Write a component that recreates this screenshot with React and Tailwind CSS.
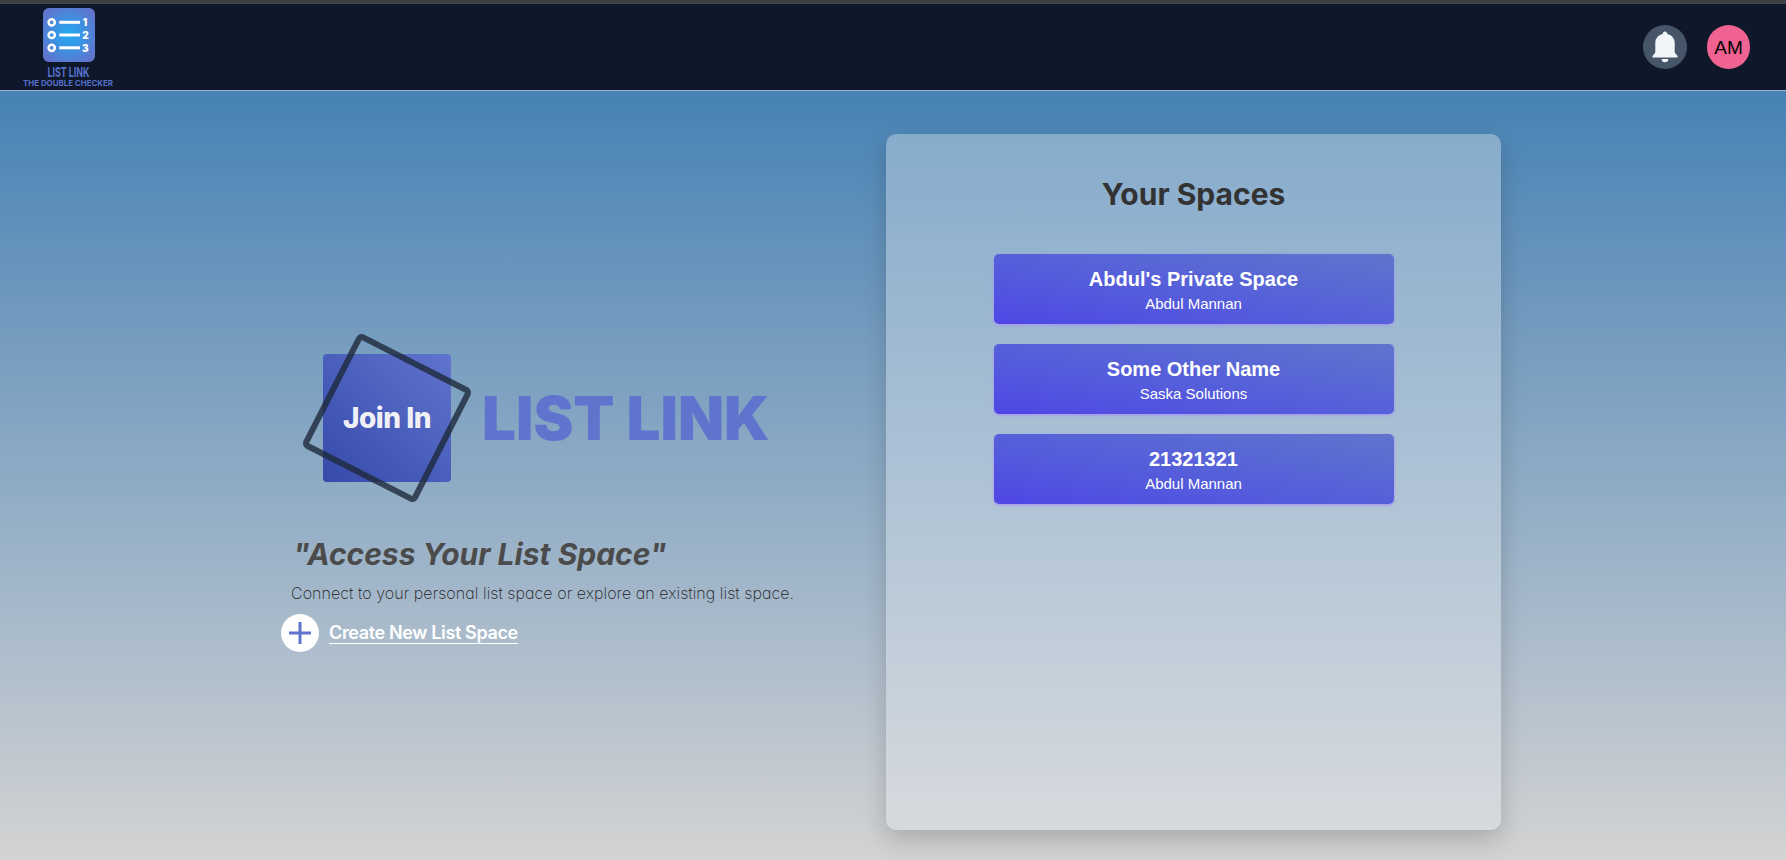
const spaces = [
  { title: "Abdul's Private Space", owner: 'Abdul Mannan' },
  { title: 'Some Other Name', owner: 'Saska Solutions' },
  { title: '21321321', owner: 'Abdul Mannan' },
];

function Logo() {
  return (
    <svg width="92" height="81" viewBox="0 0 92 81" aria-label="List Link">
      <defs>
        <radialGradient id="glow" cx="0.5" cy="0.5" r="0.6">
          <stop offset="0" stopColor="#1fabf5" />
          <stop offset="1" stopColor="#6074cd" />
        </radialGradient>
      </defs>
      <rect x="20" y="0" width="52" height="54" rx="6" fill="url(#glow)" />
      <g stroke="#fff" fill="none">
        {[14.3, 27, 39.8].map((y) => (
          <g key={y}>
            <circle cx="28.7" cy={y} r="3.1" strokeWidth="2.5" />
            <path d={`M36.3 ${y}h20.7`} strokeWidth="3" />
          </g>
        ))}
      </g>
      <g fill="#fff" fontFamily="Inter, sans-serif" fontWeight="900" fontSize="10" textAnchor="middle">
        <text x="62" y="18">1</text>
        <text x="62.4" y="30.8">2</text>
        <text x="62.4" y="43.6">3</text>
      </g>
      <g fill="#5672cc" fontFamily="Inter, sans-serif">
        <text x="24.5" y="69.3" fontSize="13.5" fontWeight="700" textLength="42" lengthAdjust="spacingAndGlyphs">LIST LINK</text>
        <text x="0" y="77.8" fontSize="7.6" fontWeight="700" textLength="90" lengthAdjust="spacingAndGlyphs">THE DOUBLE CHECKER</text>
      </g>
    </svg>
  );
}

function Bell() {
  return (
    <svg width="26" height="32" viewBox="0 0 26 32" fill="#f1f5f9">
      <path d="M13 0.5c1.300 0 2.300 0.900 2.300 2.500C19.800 3.900 22.700 7.500 22.700 12V21.500L25.500 25V26.500H0.500V25L3.300 21.500V12C3.300 7.500 6.200 3.900 10.700 3C10.700 1.400 11.700 0.500 13 0.500z" />
      <path d="M9.700 28h6.600a3.300 3.300 0 0 1-6.600 0z" />
    </svg>
  );
}

export default function App() {
  return (
    <div className="flex h-[860px] flex-col overflow-hidden font-['Inter',sans-serif]">
      <div className="h-1 shrink-0 border-b border-[#46464a] bg-[#3d3e44]" />
      <header className="flex h-[87px] shrink-0 items-start justify-between border-b border-[#a3aecb] bg-[#0f172a] pl-[23px] pr-9">
        <div className="pt-1">
          <Logo />
        </div>
        <div className="flex gap-5 pt-[21px]">
          <button className="flex size-11 items-center justify-center rounded-full bg-[#475569]">
            <Bell />
          </button>
          <div className="flex h-11 w-[43px] items-center justify-center rounded-full bg-[#f06292] pt-[2px] font-['Liberation_Sans',sans-serif] text-[19px] text-black">AM</div>
        </div>
      </header>

      <main className="flex grow items-start bg-linear-to-b from-[#4682b4] to-[#d3d3d3] pl-[281px] pt-[43px]">
        <section className="w-[605px] shrink-0 pt-[220px]">
          <div className="flex items-center pl-[42px]">
            <div className="relative flex size-32 items-center justify-center rounded bg-linear-to-tr from-[#364aab] to-[#6074cd] text-[28px] font-extrabold tracking-[-0.5px] text-[#f1f1f5]">
              Join In
              <span className="absolute inset-0 rotate-[27deg] rounded-md border-6 border-[#1e293b]/80" />
            </div>
            <h1 className="ml-[31px] whitespace-nowrap text-[60px] font-black leading-none text-[#6074cd]">LIST LINK</h1>
          </div>
          <h2 className="mt-[54px] pl-3 text-[30px] font-bold italic leading-9 text-[#4b4b4b]">"Access Your List Space"</h2>
          <p className="mt-[9px] whitespace-nowrap pl-[10px] text-base font-extralight leading-6 tracking-[0.065px] text-[#222] [font-feature-settings:'cv11']">
            Connect to your personal list space or explore an existing list space.
          </p>
          <div className="mt-[9px] flex items-center gap-[10px]">
            <span className="flex size-[38px] items-center justify-center rounded-full bg-white">
              <svg width="22" height="22" viewBox="0 0 22 22" stroke="#6074cd" strokeWidth="3">
                <path d="M11 0v22M0 11h22" />
              </svg>
            </span>
            <a className="border-b border-white text-[18px] font-semibold leading-[21px] tracking-[-0.36px] text-white">Create New List Space</a>
          </div>
        </section>

        <section className="flex h-[696px] w-[615px] shrink-0 flex-col items-center rounded-[10px] bg-[#e6edf2]/37 pt-[42px] shadow-[0_10px_25px_rgba(0,0,0,0.18)]">
          <h2 className="text-[30px] font-bold leading-9 text-[#333]">Your Spaces</h2>
          <div className="mt-[42px] flex w-[400px] flex-col gap-5 font-['Liberation_Sans',sans-serif] text-white">
            {spaces.map((s) => (
              <button key={s.title} className="flex h-[70px] flex-col items-center justify-center rounded-[5px] bg-linear-to-tr from-[#4f46e5] to-[#6074cd] pt-[2px] shadow-[0_1px_3px_#a78bfa]">
                <span className="text-xl font-bold leading-7">{s.title}</span>
                <span className="text-[15px] leading-[22px] text-white">{s.owner}</span>
              </button>
            ))}
          </div>
        </section>
      </main>
    </div>
  );
}
